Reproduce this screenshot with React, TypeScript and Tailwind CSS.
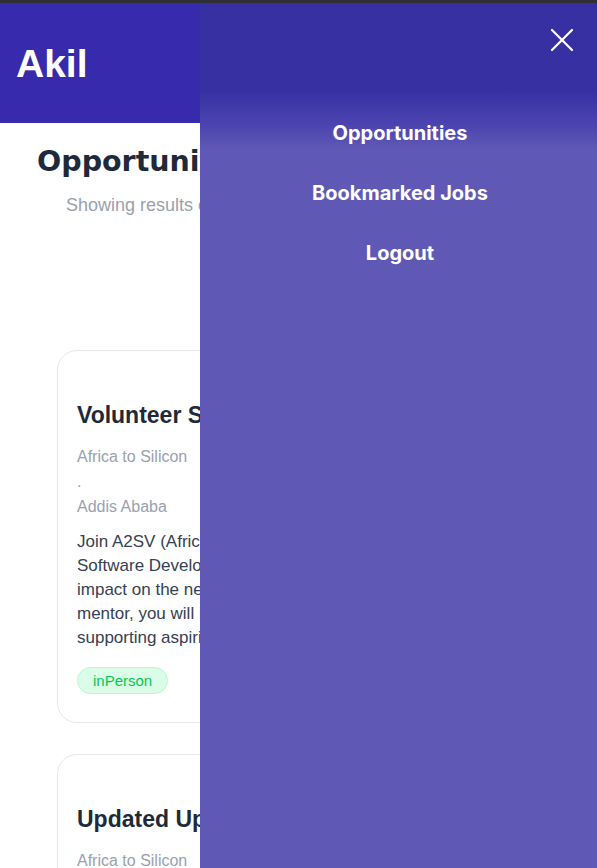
import { X } from 'lucide-react';

interface Job {
  title: string;
  company: string;
  location: string;
  description: string;
  tag: string;
}

const jobs: Job[] = [
  {
    title: 'Volunteer Software Development Mentor',
    company: 'Africa to Silicon',
    location: 'Addis Ababa',
    description:
      'Join A2SV (Africa to Silicon Valley) as a Volunteer Software Developer Mentor and make a lasting, positive impact on the next generation of tech innovators. As a mentor, you will inspire students through coding and supporting aspiring engineers on their journey.',
    tag: 'inPerson',
  },
  {
    title: 'Updated Updated Volunteer Mentor',
    company: 'Africa to Silicon',
    location: 'Addis Ababa',
    description:
      'Join A2SV (Africa to Silicon Valley) as a Volunteer Software Developer Mentor and make a lasting, positive impact on the next generation of tech innovators.',
    tag: 'inPerson',
  },
];

function JobCard({ job }: { job: Job }) {
  return (
    <div className="mx-[57px] rounded-[20px] border border-gray-200 bg-white px-[19px] pt-[50px] pb-[28px] font-['Liberation_Sans',Arial,sans-serif]">
      <h2 className="text-[23px] font-bold leading-[28px] text-gray-800 whitespace-nowrap">{job.title}</h2>
      <div className="mt-[15px] text-base leading-[25px] text-gray-400">
        <p>{job.company}</p>
        <p>.</p>
        <p>{job.location}</p>
      </div>
      <p className="mt-[11px] text-[17px] leading-6 text-gray-700">{job.description}</p>
      <div className="mt-[17px] flex">
        <span className="rounded-full border border-green-200 bg-green-100 px-[15px] text-[15px] leading-[25px] text-green-500">
          {job.tag}
        </span>
      </div>
    </div>
  );
}

export default function App() {
  return (
    <div className="flex min-h-screen flex-col bg-white">
      <div className="h-[3px] shrink-0 bg-[#2f3033]" />
      <div className="relative flex-1 overflow-hidden">
        {/* Header */}
        <header className="flex h-[120px] items-center bg-indigo-800 px-4">
          <span className="font-['Liberation_Sans',Arial,sans-serif] text-[39px] font-bold leading-none text-white">
            Akil
          </span>
        </header>

        {/* Page */}
        <main className="pb-10">
          <h1 className="mt-[21px] pl-[37px] font-['DejaVu_Sans',sans-serif] text-[28.5px] font-bold leading-9 text-gray-800">
            Opportunities
          </h1>
          <p className="mt-[11px] pl-[66px] font-['Liberation_Sans',Arial,sans-serif] text-lg leading-7 text-gray-400">
            Showing results of 73
          </p>
          <div className="mt-[131px] flex flex-col gap-[31px]">
            {jobs.map((job) => (
              <JobCard key={job.title} job={job} />
            ))}
          </div>
        </main>

        {/* Mobile menu overlay */}
        <aside className="absolute inset-y-0 right-0 w-[397px] bg-[linear-gradient(to_bottom,#3730a3_88px,#4b44b0_122px,#5f59b5_146px)]">
          <button className="absolute right-[15px] top-[17px] text-white">
            <X size={40} strokeWidth={2.2} absoluteStrokeWidth />
          </button>
          <nav className="flex flex-col items-center gap-8 pl-[3px] pt-[116px] font-['Inter',sans-serif] text-xl font-bold leading-7 text-white">
            <a>Opportunities</a>
            <a>Bookmarked Jobs</a>
            <a>Logout</a>
          </nav>
        </aside>
      </div>
    </div>
  );
}
